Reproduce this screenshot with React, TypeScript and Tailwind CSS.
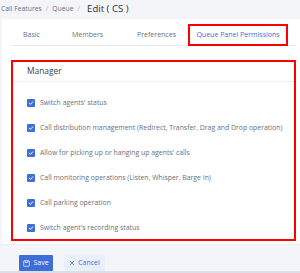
const FONT = { fontFamily: '"Open Sans", "Noto Sans", Arial, sans-serif' }

const PERMISSIONS = [
  "Switch agents' status",
  'Call distribution management (Redirect, Transfer, Drag and Drop operation)',
  "Allow for picking up or hanging up agents' calls",
  'Call monitoring operations (Listen, Whisper, Barge In)',
  'Call parking operation',
  "Switch agent's recording status",
]

function CheckBox() {
  return (
    <span className="flex h-[8px] w-[8px] shrink-0 items-center justify-center rounded-[1px] bg-[#3e6fd9]">
      <svg width="6" height="6" viewBox="0 0 10 10" fill="none">
        <path d="M2 5.2 4.2 7.3 8 3" stroke="white" strokeWidth="1.6" strokeLinecap="round" strokeLinejoin="round" />
      </svg>
    </span>
  )
}

export default function App() {
  return (
    <div className="flex h-[273px] w-[300px] flex-col overflow-hidden bg-[#f4f5f8]" style={FONT}>
      <div className="flex h-[19px] items-center gap-[4px] pl-[1px] text-[6.8px] text-[#6b6f78]">
        <span>Call Features</span>
        <span className="text-[#b0b4bc]">/</span>
        <span>Queue</span>
        <span className="text-[#b0b4bc]">/</span>
        <span className="ml-[3px] text-[9.6px] text-[#2b2f38]">Edit ( CS )</span>
      </div>

      <div className="ml-[2px] flex h-[225px] flex-col bg-white pl-[9px]">
        <div className="mt-[6px] mr-[4px] flex h-[21px] items-center border-b border-[#e8eaef] text-[7px] text-[#6b6f78]">
          <span className="ml-[12px] w-[49px]">Basic</span>
          <span className="w-[65px]">Members</span>
          <span className="w-[51px]">Preferences</span>
          <span className="flex h-[22px] w-[100px] items-center justify-center border-2 border-[#ff0000] text-[#3e6fd9]">
            Queue Panel Permissions
          </span>
        </div>

        <div className="mt-[14px] mr-[4px] flex h-[181px] flex-col border-2 border-[#ff0000]">
          <div className="flex h-[20px] items-center border-b border-[#eceef2] pl-[14px] text-[8.4px] text-[#3a3e46]">
            Manager
          </div>
          <div className="flex flex-col gap-[17px] pt-[17px] pl-[14px] text-[6.9px] text-[#6b6f78]">
            {PERMISSIONS.map((label) => (
              <div key={label} className="flex h-[8px] items-center gap-[5px]">
                <CheckBox />
                <span className="whitespace-nowrap">{label}</span>
              </div>
            ))}
          </div>
        </div>
      </div>

      <div className="flex flex-1 flex-col border-t border-[#eceef2]">
        <div className="mt-[10px] ml-[19px] flex gap-[11px] text-[7px]">
          <button className="flex h-[16px] w-[34px] items-center justify-center gap-[3px] rounded-[1px] bg-[#3e6fd9] text-white">
            <svg width="7" height="7" viewBox="0 0 10 10" fill="none" stroke="white" strokeWidth="1">
              <rect x="1" y="1" width="8" height="8" rx="1" />
              <path d="M3 1v2.5h4V1" />
            </svg>
            Save
          </button>
          <button className="flex h-[16px] w-[41px] items-center justify-center gap-[3px] rounded-[1px] bg-[#eaf0fb] text-[#3e6fd9]">
            <svg width="6" height="6" viewBox="0 0 10 10" fill="none" stroke="#3e6fd9" strokeWidth="1.3" strokeLinecap="round">
              <path d="M2 2l6 6M8 2 2 8" />
            </svg>
            Cancel
          </button>
        </div>
        <div className="mt-auto h-[2px] bg-[#dcdfe5]" />
      </div>
    </div>
  )
}
